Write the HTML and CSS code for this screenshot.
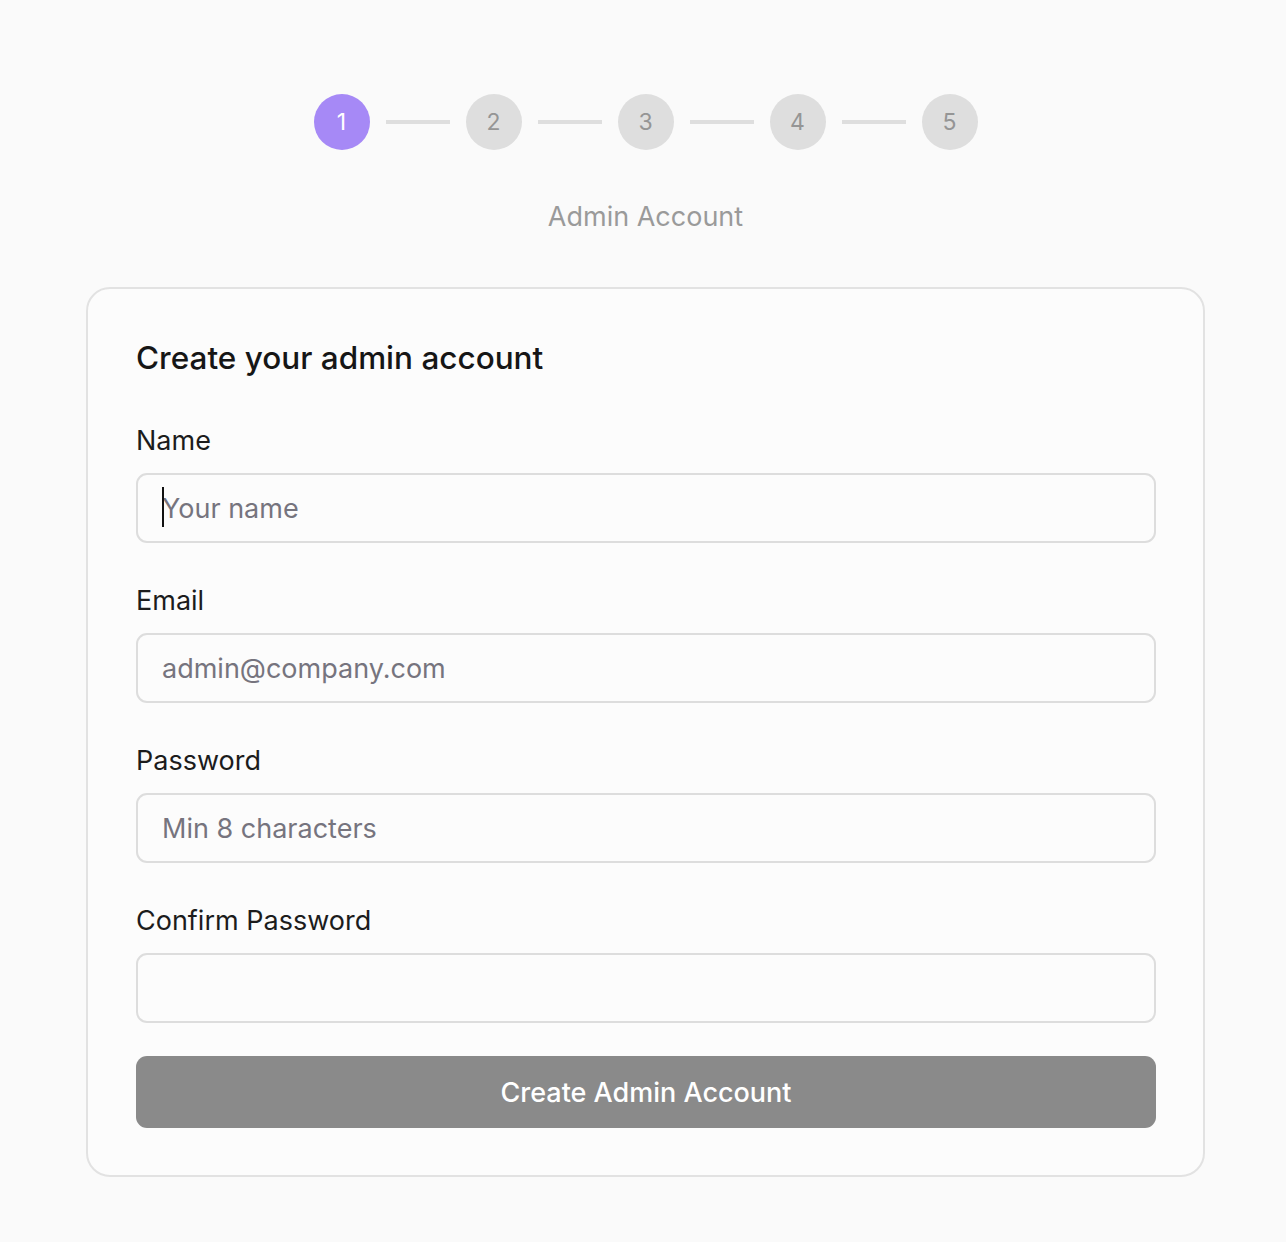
FILE: index.html
```html
<!DOCTYPE html>
<html lang="en">
<head>
<meta charset="utf-8">
<title>Setup - Admin Account</title>
<link rel="stylesheet" href="styles.css">
</head>
<body>
<main class="page">
  <div class="stepper">
    <div class="step active">1</div>
    <div class="step-line"></div>
    <div class="step">2</div>
    <div class="step-line"></div>
    <div class="step">3</div>
    <div class="step-line"></div>
    <div class="step">4</div>
    <div class="step-line"></div>
    <div class="step">5</div>
  </div>
  <div class="step-label">Admin Account</div>

  <form class="card">
    <h1 class="card-title">Create your admin account</h1>
    <div class="field">
      <label class="label" for="name">Name</label>
      <div class="input-wrap">
        <input class="input" id="name" type="text" placeholder="Your name">
        <span class="caret"></span>
      </div>
    </div>
    <div class="field">
      <label class="label" for="email">Email</label>
      <input class="input" id="email" type="email" placeholder="admin@company.com">
    </div>
    <div class="field">
      <label class="label" for="pw">Password</label>
      <input class="input" id="pw" type="password" placeholder="Min 8 characters">
    </div>
    <div class="field">
      <label class="label" for="pw2">Confirm Password</label>
      <input class="input" id="pw2" type="password">
    </div>
    <button class="submit" type="button">Create Admin Account</button>
  </form>
</main>
</body>
</html>
```

FILE: styles.css
```css
* { box-sizing: border-box; }

body {
  margin: 0;
  background: #fafafa;
  font-family: Inter, "Noto Sans", sans-serif;
  color: #1a1a1a;
}

.page {
  width: 1119px;
  margin-left: 86px;
  padding-top: 94px;
  padding-bottom: 65px;
}

.stepper {
  display: flex;
  align-items: center;
  justify-content: center;
  gap: 16px;
}

.step {
  width: 56px;
  height: 56px;
  border-radius: 50%;
  background: #dedede;
  color: #959595;
  font-size: 23px;
  display: flex;
  align-items: center;
  justify-content: center;
}

.step.active {
  background: #a689f6;
  color: #ffffff;
}

.step-line {
  width: 64px;
  height: 4px;
  background: #dedede;
}

.step-label {
  margin-top: 49px;
  text-align: center;
  font-size: 27px;
  line-height: 36px;
  color: #9a9a9a;
}

.card {
  margin-top: 52px;
  border: 2px solid #e2e2e2;
  border-radius: 24px;
  background: #fcfcfc;
  padding: 47px 47px 47px 48px;
  display: flex;
  flex-direction: column;
}

.card-title {
  margin: 0 0 41px;
  font-size: 31.5px;
  line-height: 44px;
  font-weight: 500;
  color: #161616;
}

.field {
  display: flex;
  flex-direction: column;
  margin-bottom: 38px;
}

.field:nth-last-of-type(1) { margin-bottom: 33px; }

.label {
  font-size: 27px;
  line-height: 40px;
  color: #1c1c1c;
  margin-bottom: 12px;
}

.input-wrap { position: relative; }

.input {
  width: 100%;
  height: 70px;
  border: 2px solid #dddddd;
  border-radius: 11px;
  background: #fcfcfc;
  padding: 0 24px;
  font-family: inherit;
  font-size: 27px;
  color: #1a1a1a;
  outline: none;
}

.input::placeholder { color: #76747e; }

.caret {
  position: absolute;
  left: 26px;
  top: 14px;
  width: 2px;
  height: 40px;
  background: #111;
}

.submit {
  height: 72px;
  border: none;
  border-radius: 11px;
  background: #8a8a8a;
  color: #ffffff;
  font-family: inherit;
  font-size: 27px;
  font-weight: 500;
}
```
